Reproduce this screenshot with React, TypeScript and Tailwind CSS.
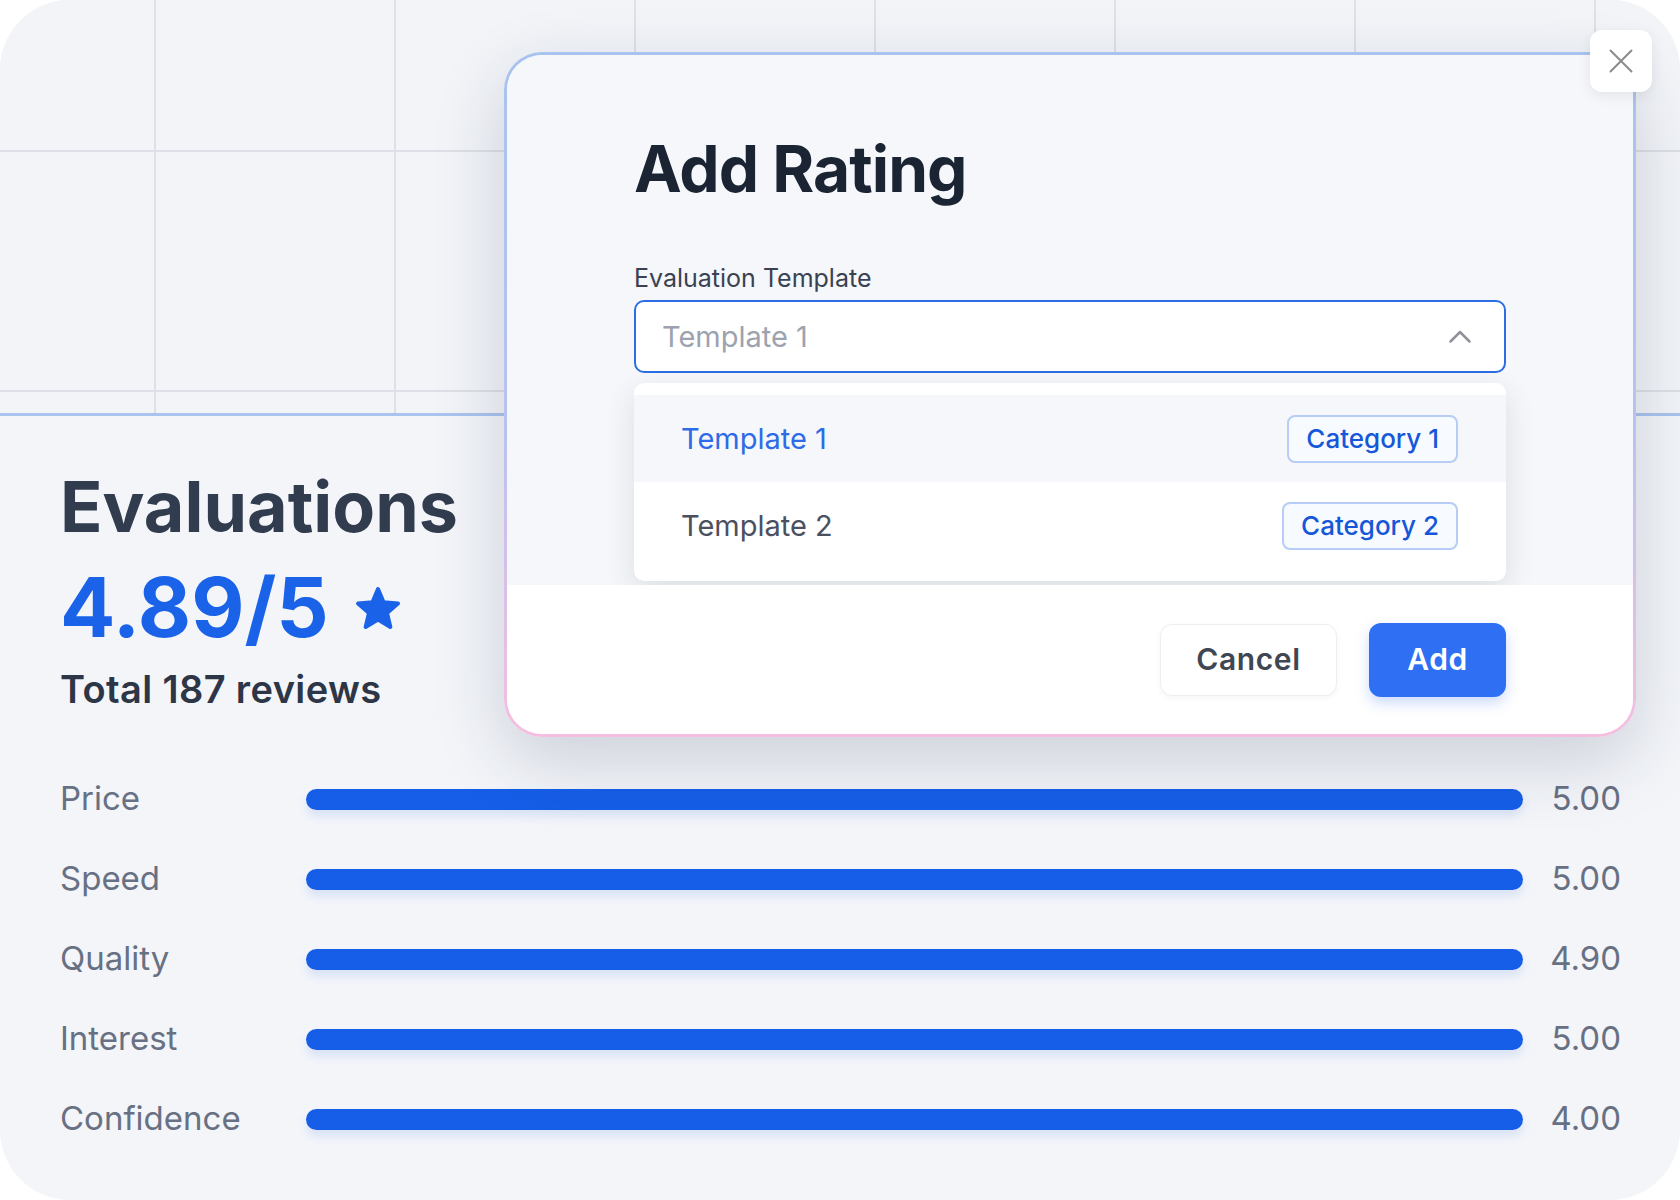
import React from "react";

const ratings = [
  { label: "Price", value: "5.00" },
  { label: "Speed", value: "5.00" },
  { label: "Quality", value: "4.90" },
  { label: "Interest", value: "5.00" },
  { label: "Confidence", value: "4.00" },
];

function StarIcon() {
  return (
    <svg width="50" height="48" viewBox="0 0 50 48" fill="none">
      <polygon
        points="25,5 30.58,18.31 44.97,19.51 34.03,28.94 37.34,42.99 25,35.5 12.66,42.99 15.97,28.94 5.03,19.51 19.42,18.31"
        fill="#1a63e9"
        stroke="#1a63e9"
        strokeWidth="4"
        strokeLinejoin="round"
      />
    </svg>
  );
}

function Modal() {
  return (
    <div className="absolute left-[504px] top-[52px] w-[1132px] h-[685px] rounded-[38px] p-[3px] bg-[linear-gradient(180deg,#a8c3ee_0%,#b9c2f0_55%,#f6bee0_100%)] shadow-[0_24px_70px_rgba(30,41,70,0.18)]">
      <div className="h-full rounded-[35px] overflow-hidden bg-white flex flex-col">
        <div className="bg-[#f5f7fa] px-[127px] pt-[81px] pb-[4px]">
          <h2 className="text-[64px] leading-[66px] font-bold text-[#1a2433] tracking-[-0.015em]">Add Rating</h2>
          <div className="mt-[60px] text-[25px] leading-[32px] text-[#3a4252]">Evaluation Template</div>
          <div className="mt-[6px] h-[73px] rounded-[10px] border-2 border-[#2b6de3] bg-white flex items-center justify-between pl-[26px] pr-[33px]">
            <span className="text-[29px] text-[#9ca3af]">Template 1</span>
            <svg width="22" height="13" viewBox="0 0 22 13" fill="none">
              <polyline points="1.5,11.5 11,2 20.5,11.5" stroke="#8f9399" strokeWidth="2.5" strokeLinecap="round" strokeLinejoin="round" />
            </svg>
          </div>
          <div className="mt-[10px] rounded-[10px] bg-white py-[12px] shadow-[0_10px_30px_rgba(30,41,59,0.12)]">
            <div className="h-[87px] bg-[#f5f7fa] flex items-center justify-between pl-[47px] pr-[48px]">
              <span className="text-[29px] text-[#2e6be6]">Template 1</span>
              <span className="h-[48px] px-[17px] rounded-[8px] border-2 border-[#b7cdf6] bg-[#f7faff] flex items-center text-[26px] font-medium text-[#1656d9]">Category 1</span>
            </div>
            <div className="h-[87px] flex items-center justify-between pl-[47px] pr-[48px]">
              <span className="text-[29px] text-[#4b5060]">Template 2</span>
              <span className="h-[48px] px-[17px] rounded-[8px] border-2 border-[#b7cdf6] bg-[#f7faff] flex items-center text-[26px] font-medium text-[#1656d9]">Category 2</span>
            </div>
          </div>
        </div>
        <div className="flex-1 bg-white flex items-center justify-end gap-[32px] pr-[127px]">
          <button className="w-[177px] h-[72px] rounded-[12px] bg-white border border-[#eceef2] shadow-[0_2px_6px_rgba(0,0,0,0.04)] text-[30px] font-semibold tracking-[0.02em] text-[#3f4654]">Cancel</button>
          <button className="w-[137px] h-[74px] rounded-[12px] bg-[#2f6ff4] shadow-[0_6px_14px_rgba(47,111,244,0.25)] text-[30px] font-semibold tracking-[0.02em] text-white">Add</button>
        </div>
      </div>
    </div>
  );
}

export default function App() {
  return (
    <div className="w-[1680px] h-[1200px] bg-white font-['Inter',sans-serif]">
      <div className="relative w-full h-full rounded-[70px] bg-[#f3f5f9] overflow-hidden">
        <div className="h-[416px] border-b-[3px] border-[#aac4ee] bg-[#f2f4f8] bg-[image:linear-gradient(to_right,#dde0e6_2px,transparent_2px),linear-gradient(to_bottom,#dde0e6_2px,transparent_2px)] bg-[length:240px_240px] bg-[position:154px_150px]" />

        <div className="pl-[60px] pr-[59px] pt-[56px]">
          <h1 className="text-[70px] leading-[70px] font-bold text-[#323c4f]">Evaluations</h1>
          <div className="mt-[25px] flex items-center gap-[24px]">
            <span className="text-[82px] leading-[82px] font-bold text-[#1a63e9]">4.89/5</span>
            <StarIcon />
          </div>
          <div className="mt-[21px] text-[38px] leading-[38px] font-semibold tracking-[0.01em] text-[#2d3647]">Total 187 reviews</div>

          <div className="mt-[51px] flex flex-col">
            {ratings.map((r) => (
              <div key={r.label} className="h-[80px] flex items-center">
                <span className="w-[246px] text-[33px] text-[#687083]">{r.label}</span>
                <div className="flex-1 h-[21px] rounded-full bg-[#165ee8] shadow-[0_6px_10px_rgba(22,94,232,0.12)]" />
                <span className="w-[98px] text-right text-[33px] text-[#687083]">{r.value}</span>
              </div>
            ))}
          </div>
        </div>

        <Modal />

        <div className="absolute left-[1590px] top-[30px] w-[62px] h-[62px] rounded-[12px] bg-white shadow-[0_4px_14px_rgba(0,0,0,0.08)] flex items-center justify-center">
          <svg width="24" height="24" viewBox="0 0 24 24" fill="none">
            <path d="M1.5 1.5L22.5 22.5M22.5 1.5L1.5 22.5" stroke="#8b8b8b" strokeWidth="2" strokeLinecap="round" />
          </svg>
        </div>
      </div>
    </div>
  );
}
